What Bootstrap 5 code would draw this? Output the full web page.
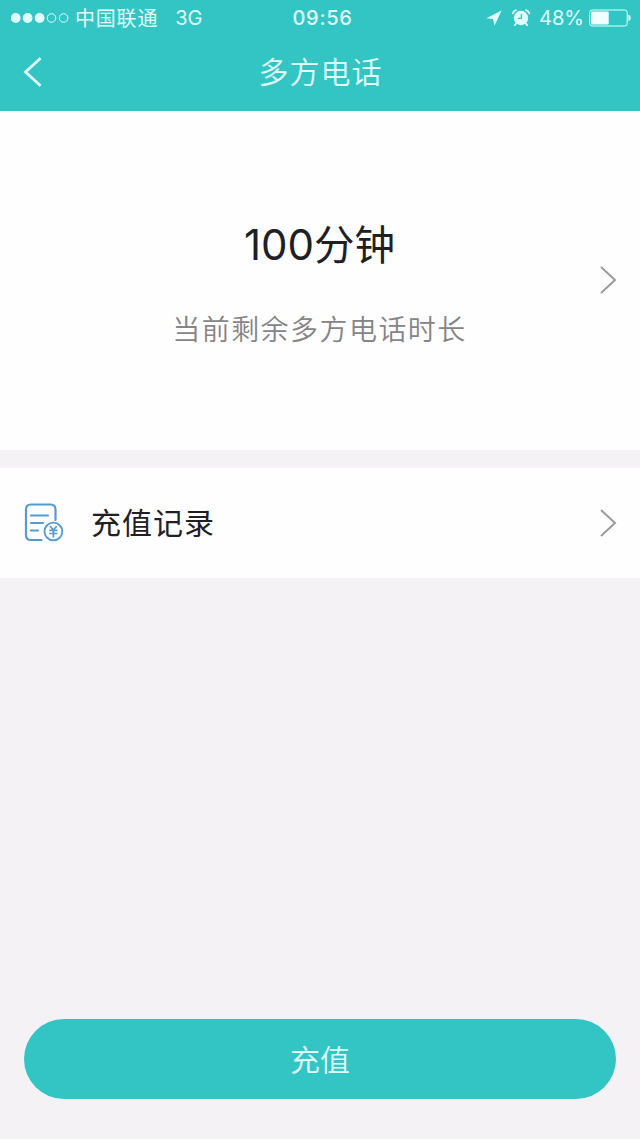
<!DOCTYPE html>
<html lang="zh-CN">
<head>
<meta charset="utf-8">
<meta name="viewport" content="width=device-width, initial-scale=1">
<title>多方电话</title>
<link href="https://cdn.jsdelivr.net/npm/bootstrap@5.3.0/dist/css/bootstrap.min.css" rel="stylesheet">
<style>
  body { font-family: Inter, "Noto Sans CJK SC", sans-serif; background: #f4f2f5; color: #202024; }
  .app-header { background: #32c5c3; height: 111px; color: #e2ffff; }
  .status-bar { height: 36px; padding: 0 9px 0 11px; font-size: 20px; line-height: 36px; }
  .carrier { margin-left: 6px; letter-spacing: .8px; padding-top: 1px; }
  .network { margin-left: 17px; font-size: 20px; }
  .clock { font-size: 20px; font-weight: 500; letter-spacing: .7px; margin-left: 3px; }
  .location-icon { margin-right: 9px; }
  .battery-icon { margin-left: 5px; }
  .title-bar { height: 75px; padding: 0 23px 3px; }
  .page-title { font-size: 30px; font-weight: 350; letter-spacing: 1px; line-height: 72px; padding-left: 1px; }
  .balance { height: 339px; background: #fefefe; padding: 0 23px 2px 22px; }
  .minutes { font-size: 40.5px; line-height: 54px; margin-top: 107px; }
  .minutes-number { font-size: 42px; letter-spacing: 0; }
  .minutes-label { font-size: 28px; font-weight: 350; letter-spacing: 1.45px; line-height: 40px; margin-top: 37px; color: #858487; }
  .record-row { height: 110px; margin-top: 18px; background: #fefefe; padding: 0 23px 0 24px; color: #202024; }
  .record-text { font-size: 30px; letter-spacing: 1px; line-height: 110px; margin-left: 26px; }
  .btn-recharge { --bs-btn-bg: #32c5c3; --bs-btn-color: #e2ffff; --bs-btn-hover-bg: #2bb5b3; --bs-btn-hover-color: #fff;
    height: 80px; font-size: 30px; line-height: 1; margin: 0 24px 40px; padding: 7px 13px 6px; font-weight: 350; }
</style>
</head>
<body>
<div class="d-flex flex-column vh-100 overflow-hidden">
  <header class="app-header flex-shrink-0">
    <div class="status-bar d-flex align-items-center">
      <div class="col d-flex align-items-center text-nowrap">
        <svg width="58" height="12" viewBox="0 0 58 12" aria-hidden="true">
          <g fill="currentColor"><circle cx="4.7" cy="6" r="4.9"/><circle cx="16.6" cy="6" r="4.9"/><circle cx="28.6" cy="6" r="4.9"/></g>
          <g fill="none" stroke="currentColor"><circle cx="40.5" cy="6" r="4.3"/><circle cx="52.6" cy="6" r="4.3"/></g>
        </svg>
        <span class="carrier">中国联通</span><span class="network">3G</span>
      </div>
      <div class="clock">09:56</div>
      <div class="col d-flex align-items-center justify-content-end">
        <svg class="location-icon" width="16" height="16" viewBox="0 0 16 16" fill="currentColor" aria-hidden="true"><path d="M15.6.5.3 8.2l6.600.900 1.600 6.700z"/></svg>
        <svg width="20" height="18" viewBox="0 0 20 18" aria-hidden="true">
          <circle cx="10" cy="9" r="7.2" fill="currentColor"/>
          <g fill="none" stroke="currentColor" stroke-width="1.7" stroke-linecap="round"><path d="M1.7 4.5Q2.5 1.8 5 1.2M18.3 4.5Q17.5 1.8 15 1.2M5.3 14.2 3.8 16.2M14.7 14.2l1.5 2"/></g>
          <path d="M10.3 4.7v4.6H6.8" fill="none" stroke="#32c5c3" stroke-width="1.2"/>
        </svg>
        <span class="ms-2">48%</span>
        <svg class="battery-icon flex-shrink-0" width="42" height="18" viewBox="0 0 42 18" aria-hidden="true">
          <rect x=".7" y="1" width="37.5" height="16" rx="2.5" fill="none" stroke="currentColor"/>
          <rect x="2.2" y="2.5" width="17.5" height="13" rx="1" fill="#f2ffff"/>
          <path d="M39.4 5.7q2.4.5 2.4 3.3t-2.4 3.3z" fill="currentColor"/>
        </svg>
      </div>
    </div>
    <nav class="title-bar d-flex align-items-center">
      <div class="col"><svg class="d-block" width="20" height="30" viewBox="0 0 20 30" fill="none" stroke="currentColor" stroke-width="2.8" aria-label="返回"><path d="M17.5 1.2 2.5 15l15 13.8"/></svg></div>
      <h1 class="page-title m-0">多方电话</h1>
      <div class="col"></div>
    </nav>
  </header>

  <main class="flex-grow-1">
    <section class="balance d-flex align-items-center">
      <div class="col"></div>
      <div class="text-center align-self-start">
        <div class="minutes"><span class="minutes-number">100</span>分钟</div>
        <div class="minutes-label">当前剩余多方电话时长</div>
      </div>
      <div class="col d-flex justify-content-end"><svg width="18" height="28" viewBox="0 0 18 28" fill="none" stroke="#9b9a9d" stroke-width="2" aria-hidden="true"><path d="m2 1 14 13L2 27"/></svg></div>
    </section>

    <a class="record-row d-flex align-items-center text-decoration-none" href="#">
      <svg width="41" height="40" viewBox="0 0 41 40" fill="none" stroke="#549bd2" stroke-width="2.2" aria-hidden="true">
        <path d="M17.5 37H7q-5 0-5-5V6.500q0-5 5-5h19.500q5 0 5 5V17" stroke-linecap="round"/>
        <path d="M7 12.500h17M7 20h12M7 27.500h7" stroke-linecap="round"/>
        <circle cx="29.400" cy="28.500" r="8.900" stroke-width="1.900"/>
        <path d="m26 23 3.400 4 3.400-4M25.300 27.300h8.200M25.300 30.500h8.200M29.400 27v7.500" stroke-width="1.700"/>
      </svg>
      <span class="record-text">充值记录</span>
      <svg class="ms-auto" width="18" height="28" viewBox="0 0 18 28" fill="none" stroke="#9b9a9d" stroke-width="2" aria-hidden="true"><path d="m2 1 14 13L2 27"/></svg>
    </a>
  </main>

  <button class="btn btn-recharge rounded-pill border-0 flex-shrink-0" type="button">充值</button>
</div>
<script src="https://cdn.jsdelivr.net/npm/bootstrap@5.3.0/dist/js/bootstrap.bundle.min.js"></script>
</body>
</html>
